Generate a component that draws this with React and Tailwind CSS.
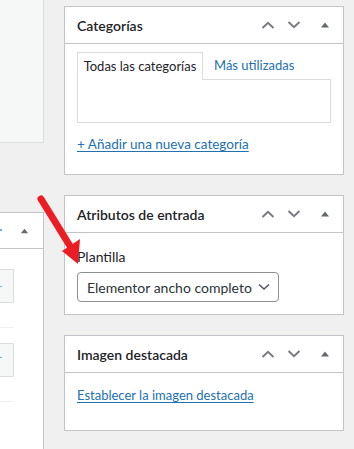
import React from "react";

const font = { fontFamily: 'Lato, "Liberation Sans", sans-serif' };

const HeaderButtons = () => (
  <div className="flex h-full items-center">
    <button className="flex h-full w-[26px] items-center justify-center">
      <svg width="14" height="8" viewBox="0 0 14 8" fill="none">
        <path d="M1.5 7 L7 1.8 L12.5 7" stroke="#787c82" strokeWidth="2" />
      </svg>
    </button>
    <button className="flex h-full w-[26px] items-center justify-center">
      <svg width="14" height="8" viewBox="0 0 14 8" fill="none">
        <path d="M1.5 1 L7 6.2 L12.5 1" stroke="#787c82" strokeWidth="2" />
      </svg>
    </button>
    <button className="flex h-full w-[36px] items-center justify-center">
      <svg width="10" height="6" viewBox="0 0 10 6">
        <path d="M1 5.5 L5 0.5 L9 5.5 Z" fill="#646970" />
      </svg>
    </button>
  </div>
);

const Postbox = ({ title, children }) => (
  <div className="w-[280px] border border-[#c3c4c7] bg-white">
    <div className="flex h-[37px] items-center justify-between border-b border-[#c3c4c7]">
      <h2 className="pl-3 text-[14px] font-semibold text-[#1d2327]">{title}</h2>
      <HeaderButtons />
    </div>
    {children}
  </div>
);

export default function App() {
  return (
    <div
      className="relative flex h-[449px] w-[354px] overflow-hidden bg-[#f0f0f1] text-[13px] text-[#3c434a]"
      style={font}
    >
      {/* left column, cut off */}
      <div className="flex w-[44px] shrink-0 flex-col">
        <div className="h-[143px] border-b border-r border-[#dcdcde] bg-[#f6f7f7]" />
        <div className="mt-[69px] flex-1 border-r border-t border-[#c3c4c7] bg-white">
          <div className="relative flex h-[36px] items-center justify-end border-b border-[#c3c4c7] pr-[14px]">
            <span className="absolute left-0 top-[16px] h-[2px] w-[2px] bg-[#72aee6]" />
            <svg width="9" height="6" viewBox="0 0 10 6">
              <path d="M1 5.5 L5 0.5 L9 5.5 Z" fill="#646970" />
            </svg>
          </div>
          <div className="flex flex-col pt-[20px]">
            <div className="relative h-[34px] w-[14px] border border-l-0 border-[#dcdcde] bg-[#f6f7f7]">
              <span className="absolute left-0 top-[16px] h-[1px] w-[2px] bg-[#72aee6]" />
            </div>
            <div className="mt-[24px] h-[1px] w-[14px] bg-[#f0f0f1]" />
            <div className="relative mt-[15px] h-[34px] w-[14px] border border-l-0 border-[#dcdcde] bg-[#f6f7f7]">
              <span className="absolute left-0 top-[13px] h-[1px] w-[2px] bg-[#72aee6]" />
            </div>
            <div className="mt-[24px] h-[1px] w-[14px] bg-[#f0f0f1]" />
          </div>
        </div>
      </div>

      {/* right sidebar */}
      <div className="ml-[20px] flex flex-col gap-[20px] pt-[6px]">
        <Postbox title="Categorías">
          <div className="h-[130px] px-3 pt-2">
            <div className="flex">
              <div className="relative z-10 -mb-px flex h-[28px] w-[126px] items-center justify-center border border-b-0 border-[#dcdcde] bg-white text-[#1d2327]">
                Todas las categorías
              </div>
              <div className="flex h-[27px] items-center pl-[11px] text-[#2271b1]">
                Más utilizadas
              </div>
            </div>
            <div className="h-[44px] w-[254px] border border-[#dcdcde] bg-white" />
            <a className="mt-[11px] block text-[13.5px] text-[#2271b1] underline underline-offset-2" href="#">
              + Añadir una nueva categoría
            </a>
          </div>
        </Postbox>

        <Postbox title="Atributos de entrada">
          <div className="px-3 pb-3 pt-[14px]">
            <p className="text-[14px] leading-[20px] text-[#1d2327]">Plantilla</p>
            <div className="mt-[5px] flex h-[30px] w-[202px] items-center justify-between rounded-[4px] border border-[#8c8f94] pl-[9px] pr-[8px] text-[14px] text-[#2c3338]">
              <span className="whitespace-nowrap">Elementor ancho completo</span>
              <svg width="12" height="8" viewBox="0 0 12 8" fill="none">
                <path d="M1 1.5 L6 6 L11 1.5" stroke="#50575e" strokeWidth="1.6" />
              </svg>
            </div>
          </div>
        </Postbox>

        <Postbox title="Imagen destacada">
          <div className="h-[57px] px-3 pt-[13px]">
            <a className="text-[#2271b1] underline underline-offset-2" href="#">
              Establecer la imagen destacada
            </a>
          </div>
        </Postbox>
      </div>

      {/* red annotation arrow */}
      <svg
        className="pointer-events-none absolute left-0 top-0"
        width="354"
        height="449"
        viewBox="0 0 354 449"
      >
        <line x1="41" y1="199" x2="70" y2="246" stroke="#ec1c24" strokeWidth="7" strokeLinecap="round" />
        <polygon points="62,251 80,239 78,264" fill="#ec1c24" />
      </svg>
    </div>
  );
}
